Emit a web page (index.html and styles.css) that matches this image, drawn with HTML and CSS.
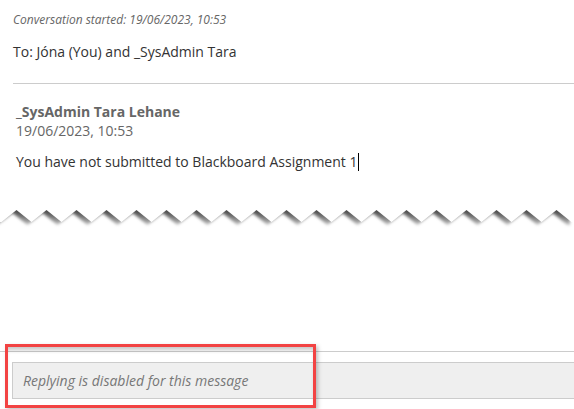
FILE: index.html
```html
<!DOCTYPE html>
<html lang="en">

<head>
    <meta charset="UTF-8">
    <meta name="viewport" content="width=device-width, initial-scale=1.0">
    <title>Conversation</title>
    <link rel="stylesheet" href="styles.css">
</head>

<body>
    <!-- Intestazione conversazione -->
    <div class="conv-head">
        <p class="started">Conversation started: 19/06/2023, 10:53</p>
        <p class="recipients">To: Jóna (You) and _SysAdmin Tara</p>
    </div>

    <!-- Messaggio -->
    <div class="message">
        <p class="author">_SysAdmin Tara Lehane</p>
        <p class="date">19/06/2023, 10:53</p>
        <p class="body">You have not submitted to Blackboard Assignment 1<span class="caret"></span></p>
    </div>

    <!-- Bordo strappato -->
    <svg class="torn" width="574" height="34" viewBox="0 0 574 34">
        <defs>
            <filter id="soft" x="-10%" y="-50%" width="120%" height="200%">
                <feGaussianBlur stdDeviation="1.8" />
            </filter>
            <linearGradient id="fade" gradientUnits="userSpaceOnUse" x1="0" y1="9" x2="0" y2="26">
                <stop offset="0" stop-color="#505050" />
                <stop offset="0.55" stop-color="#9c9c9c" />
                <stop offset="1" stop-color="#ffffff" />
            </linearGradient>
        </defs>
        <path d="M0,-20 H574 V22 L571.5,22 l-15,-12 l-15,12 l-15,-12 l-15,12 l-15,-12 l-15,12 l-15,-12 l-15,12 l-15,-12 l-15,12 l-15,-12 l-15,12 l-15,-12 l-15,12 l-15,-12 l-15,12 l-15,-12 l-15,12 l-15,-12 l-15,12 l-15,-12 l-15,12 l-15,-12 l-15,12 l-15,-12 l-15,12 l-15,-12 l-15,12 l-15,-12 l-15,12 l-15,-12 l-15,12 l-15,-12 l-15,12 l-15,-12 l-15,12 l-15,-12 l-15,12 L0,22 Z"
            fill="url(#fade)" filter="url(#soft)" transform="translate(-4,3)" />
        <path d="M0,-20 H574 V22 L571.5,22 l-15,-12 l-15,12 l-15,-12 l-15,12 l-15,-12 l-15,12 l-15,-12 l-15,12 l-15,-12 l-15,12 l-15,-12 l-15,12 l-15,-12 l-15,12 l-15,-12 l-15,12 l-15,-12 l-15,12 l-15,-12 l-15,12 l-15,-12 l-15,12 l-15,-12 l-15,12 l-15,-12 l-15,12 l-15,-12 l-15,12 l-15,-12 l-15,12 l-15,-12 l-15,12 l-15,-12 l-15,12 l-15,-12 l-15,12 l-15,-12 l-15,12 L0,22 Z"
            fill="#ffffff" />
    </svg>

    <!-- Risposta disabilitata -->
    <div class="reply">
        <div class="reply-box">Replying is disabled for this message</div>
        <div class="highlight-box"></div>
    </div>
</body>

</html>
```

FILE: styles.css
```css
body {
    font-family: 'Open Sans', sans-serif;
    margin: 0;
    display: flex;
    flex-direction: column;
    min-height: 100vh;
    background-color: #ffffff;
    color: #333333;
    overflow: hidden;
}

p {
    margin: 0;
}

.conv-head {
    margin-left: 13px;
    padding-top: 12px;
    padding-bottom: 22px;
    border-bottom: 1px solid #cccccc;
}

.started {
    font-size: 12px;
    font-style: italic;
    color: #666666;
    line-height: 16px;
}

.recipients {
    font-size: 14px;
    line-height: 19px;
    margin-top: 14px;
    color: #333333;
}

.message {
    padding: 18px 0 0 16px;
    font-size: 14px;
    line-height: 19px;
}

.author {
    font-weight: bold;
    color: #666666;
}

.date {
    color: #666666;
}

.body {
    margin-top: 12px;
    color: #333333;
}

.caret {
    display: inline-block;
    width: 0;
    height: 18px;
    border-left: 1px solid #000000;
    margin-left: 1px;
    vertical-align: -4px;
}

.torn {
    display: block;
    margin-top: 29px;
}

/* Barra di risposta in fondo */
.reply {
    position: relative;
    margin-top: auto;
    border-top: 1px solid #cccccc;
    padding: 10px 0 10px 12px;
}

.reply-box {
    height: 35px;
    line-height: 35px;
    border: 1px solid #cccccc;
    border-right: none;
    background-color: #efefef;
    padding-left: 10px;
    font-size: 14px;
    font-style: italic;
    color: #777777;
}

.highlight-box {
    position: absolute;
    left: 5px;
    top: -8px;
    width: 305px;
    height: 58px;
    border: 3px solid #f24343;
    box-shadow: 2px 2px 4px rgba(0, 0, 0, 0.25), inset 0 5px 4px -2px rgba(0, 0, 0, 0.22);
}
```
